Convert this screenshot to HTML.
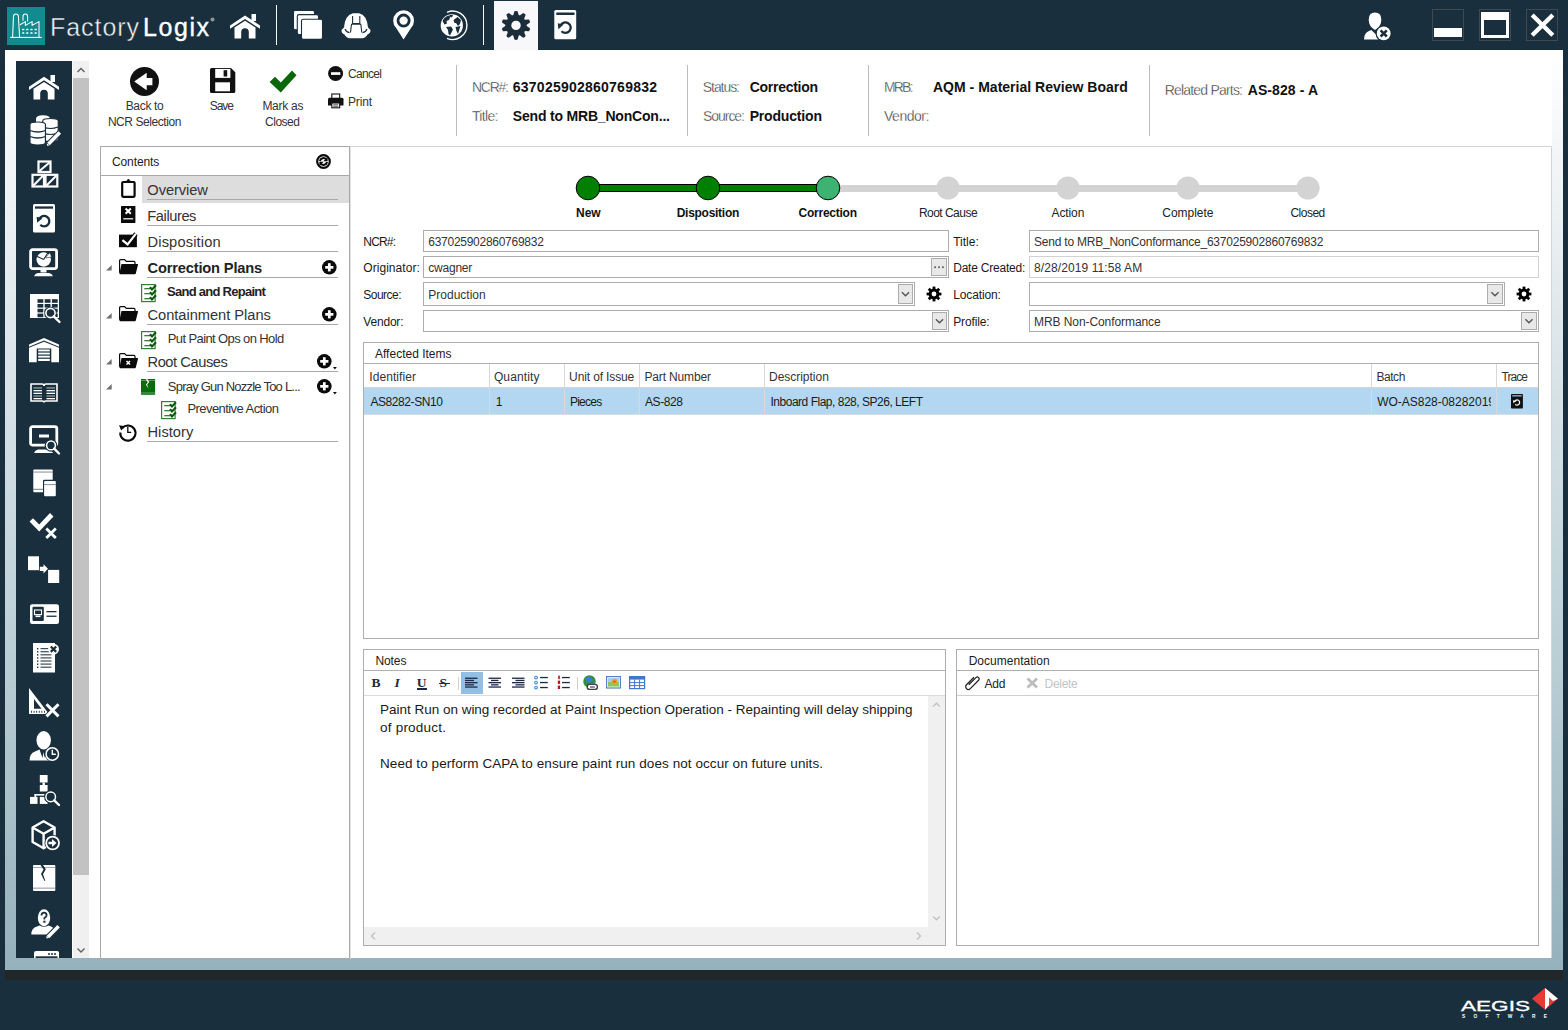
<!DOCTYPE html>
<html><head><meta charset="utf-8"><style>
*{margin:0;padding:0;box-sizing:border-box}
html,body{width:1568px;height:1030px;overflow:hidden;background:#1a2f3d;font-family:"Liberation Sans",sans-serif;color:#333}
.a{position:absolute}
.t{position:absolute;white-space:nowrap;line-height:1}
svg{position:absolute;overflow:visible}
</style></head><body>
<div class="a" style="left:5px;top:50px;width:1558px;height:920px;background:linear-gradient(#ffffff 0%,#e0e8ec 28.3%,#bfd2d9 60.9%,#a9c0c9 82.6%,#95b1bc 100%);"></div>
<div class="a" style="left:16px;top:50px;width:1536px;height:908px;background:#fff;"></div>
<div class="a" style="left:5px;top:970px;width:1558px;height:10px;background:#212729;"></div>
<div class="a" style="left:7px;top:7px;width:38px;height:38px;background:#138b8e;"></div>
<svg style="left:7px;top:7px;" width="38" height="38" viewBox="0 0 38 38"><g fill="none" stroke="#fff" stroke-width="1.05" stroke-linejoin="round"><path d="M3.2 30.4 H34.7"/><path d="M5.6 30.2 L6.5 9.2 Q6.6 7 9 7 Q11.3 7 11.4 9.2 L12.6 30.2"/><path d="M16 13.8 V9.4 Q16 7 18.3 7 Q20.6 7 20.6 9.4 V14.6"/><path d="M13 17.8 L18.4 14.6 V18.4 L25.1 14.6 V18.4 L32 14.6 V30"/></g><g fill="#fff"><rect x="15.1" y="21.7" width="2.3" height="1.5" rx="0.5"/><rect x="15.1" y="25.3" width="2.3" height="1.5" rx="0.5"/><rect x="19.1" y="21.7" width="2.3" height="1.5" rx="0.5"/><rect x="19.1" y="25.3" width="2.3" height="1.5" rx="0.5"/><rect x="23.3" y="21.7" width="2.3" height="1.5" rx="0.5"/><rect x="23.3" y="25.3" width="2.3" height="1.5" rx="0.5"/><rect x="27.5" y="21.7" width="2.3" height="1.5" rx="0.5"/><rect x="27.5" y="25.3" width="2.3" height="1.5" rx="0.5"/></g></svg>
<div class="t" style="left:50.00px;top:14.84px;font-size:25px;color:#f4f6f7;letter-spacing:0.942px;-webkit-text-stroke:0.45px #1a2f3d;">Factory</div>
<div class="t" style="left:143.00px;top:14.84px;font-size:25px;color:#ffffff;letter-spacing:1.558px;-webkit-text-stroke:0.35px #fff;">Logix</div>
<svg style="left:210px;top:17px;" width="5" height="5" viewBox="0 0 5 5"><circle cx="2.5" cy="2.5" r="2" fill="#8a97a0"/></svg>
<svg style="left:230px;top:14px;" width="30" height="25" viewBox="0 0 30 25"><g fill="#fff"><path d="M0 11.5 L15 1.5 L30 11.5 L30 14.8 L15 5 L0 14.8Z"/><rect x="21.5" y="0" width="4.5" height="7"/><path d="M4.5 13.5 L15 6.8 L25.5 13.5 L25.5 24.5 L18.8 24.5 L18.8 18 A3.8 3.8 0 0 0 11.2 18 L11.2 24.5 L4.5 24.5Z"/></g></svg>
<div class="a" style="left:276px;top:5px;width:1px;height:40px;background:#f4f6f7;"></div>
<div class="a" style="left:483px;top:5px;width:1px;height:40px;background:#f4f6f7;"></div>
<svg style="left:293px;top:10px;" width="30" height="30" viewBox="0 0 30 30"><g fill="#fff" stroke="#1a2f3d" stroke-width="1.1"><rect x="0.5" y="0.4" width="21" height="19.4" rx="1.8"/><rect x="4.3" y="4.6" width="21.2" height="20" rx="1.8"/><rect x="8.5" y="9.3" width="21" height="20.1" rx="1.8"/></g></svg>
<svg style="left:341px;top:13px;" width="30" height="26" viewBox="0 0 30 26"><path d="M12 0.2 H18 Q26 2 27 14.5 L29.5 17 Q29.7 20 26.5 21.5 Q24 25.5 21 25.2 H9 Q6 25.5 3.5 21.5 Q0.3 20 0.5 17 L3 14.5 Q4 2 12 0.2Z" fill="#fff"/><g fill="none" stroke="#1a2f3d" stroke-width="1.1"><path d="M11.6 3 V10.5 H18.8 V3"/><path d="M9.5 19.5 L10.5 11.2 H19.8 L20.8 19.5"/><path d="M4 16 Q5 19 8.5 19.6 M26 16 Q25 19 21.5 19.6"/></g></svg>
<svg style="left:393px;top:10px;" width="22" height="30" viewBox="0 0 22 30"><path d="M10.6 29.4 L3.2 18 A10.4 10.4 0 1 1 18 18Z" fill="#fff"/><circle cx="10.6" cy="10.6" r="5.6" fill="none" stroke="#1a2f3d" stroke-width="2.8"/></svg>
<svg style="left:440px;top:10px;" width="28" height="31" viewBox="0 0 28 31"><circle cx="11.8" cy="15.4" r="11.1" fill="#fff"/><path d="M7 2.3 A14.2 14.2 0 1 1 7 28.3" fill="none" stroke="#fff" stroke-width="1.4"/><g fill="#1a2f3d"><path d="M2.5 11 Q4.5 7 8 5.5 L10.5 6.5 L9 10 L6.5 11 L7 13.5 L4.5 14.5 Z"/><path d="M9 5 L13 5 L12 7.5 L10.5 7Z"/><path d="M6 17 L11 16.5 L13 19.5 L10 25.5 L8.5 24 L8 20Z"/><path d="M13.5 10 L17.5 7 L21 10 L20 14 L18 16 L16 13 L14.5 13Z"/><path d="M15.5 17 L20.5 16 L18 24 L16.5 21Z"/></g></svg>
<div class="a" style="left:494px;top:1px;width:44px;height:49px;background:#f8f8fb;"></div>
<svg style="left:502px;top:11px;" width="28" height="29" viewBox="0 0 28 29"><g transform="translate(14,14.4)" fill="#1c2d3a"><path d="M-1.6 -14.2 Q0 -14.8 1.6 -14.2 L2.9 -9.5 H-2.9Z" transform="rotate(0)"/><path d="M-1.6 -14.2 Q0 -14.8 1.6 -14.2 L2.9 -9.5 H-2.9Z" transform="rotate(36)"/><path d="M-1.6 -14.2 Q0 -14.8 1.6 -14.2 L2.9 -9.5 H-2.9Z" transform="rotate(72)"/><path d="M-1.6 -14.2 Q0 -14.8 1.6 -14.2 L2.9 -9.5 H-2.9Z" transform="rotate(108)"/><path d="M-1.6 -14.2 Q0 -14.8 1.6 -14.2 L2.9 -9.5 H-2.9Z" transform="rotate(144)"/><path d="M-1.6 -14.2 Q0 -14.8 1.6 -14.2 L2.9 -9.5 H-2.9Z" transform="rotate(180)"/><path d="M-1.6 -14.2 Q0 -14.8 1.6 -14.2 L2.9 -9.5 H-2.9Z" transform="rotate(216)"/><path d="M-1.6 -14.2 Q0 -14.8 1.6 -14.2 L2.9 -9.5 H-2.9Z" transform="rotate(252)"/><path d="M-1.6 -14.2 Q0 -14.8 1.6 -14.2 L2.9 -9.5 H-2.9Z" transform="rotate(288)"/><path d="M-1.6 -14.2 Q0 -14.8 1.6 -14.2 L2.9 -9.5 H-2.9Z" transform="rotate(324)"/><circle r="10.6"/><circle r="4.7" fill="#f8f8fb"/></g></svg>
<svg style="left:554px;top:10px;" width="23" height="30" viewBox="0 0 23 30"><rect x="0.3" y="0" width="21.9" height="29.3" rx="1.6" fill="#fff"/><rect x="2.2" y="2.4" width="18.4" height="2.5" rx="0.6" fill="#1a2f3d"/><path d="M7.5 21.2 A5.3 5.3 0 1 0 6.6 15.5" fill="none" stroke="#1a2f3d" stroke-width="2.3"/><path d="M3.8 13.2 L9.6 14.6 L4.4 19.3Z" fill="#1a2f3d"/></svg>
<svg style="left:1363px;top:12px;" width="29" height="30" viewBox="0 0 29 30"><path d="M5.7 7.5 Q5.7 0.6 12 0.6 Q18.3 0.6 18.3 7.5 Q18.3 14.6 12 17.9 Q5.7 14.6 5.7 7.5Z" fill="#fff"/><path d="M1 27.6 Q1 20.5 6.5 18.7 L8.3 17.9 L13 22.5 L16 21 L15 27.6Z" fill="#fff"/><circle cx="20.7" cy="21.4" r="8.1" fill="#1a2f3d"/><circle cx="20.7" cy="21.4" r="6.9" fill="#fff"/><path d="M17.6 18.3 L23.8 24.5 M23.8 18.3 L17.6 24.5" stroke="#1a2f3d" stroke-width="2.5"/></svg>
<div class="a" style="left:1432px;top:9px;width:32px;height:32px;border:1px solid #3d4a52;"></div>
<div class="a" style="left:1479px;top:9px;width:32px;height:32px;border:1px solid #3d4a52;"></div>
<div class="a" style="left:1526px;top:9px;width:32px;height:32px;border:1px solid #3d4a52;"></div>
<div class="a" style="left:1434px;top:28px;width:28px;height:9px;background:#fff;"></div>
<div class="a" style="left:1481px;top:12px;width:28px;height:26px;border:3px solid #fff;border-top-width:8px;"></div>
<svg style="left:1529px;top:12px;" width="27" height="26" viewBox="0 0 27 26"><path d="M3.2 3 L23.8 23.3 M23.8 3 L3.2 23.3" stroke="#fff" stroke-width="4.4"/></svg>
<div class="a" style="left:16px;top:61px;width:56px;height:897px;background:#1a2f3d;"></div>
<svg style="left:29px;top:74.5px;" width="30" height="25" viewBox="0 0 30 25"><g fill="#fff"><path d="M0 11.8 L15 1.8 L30 11.8 L30 15 L15 5.2 L0 15Z"/><rect x="21.5" y="0" width="4.5" height="7"/><path d="M4.5 13.8 L15 7 L25.5 13.8 L25.5 24.5 L18.8 24.5 L18.8 18.5 A3.8 3.8 0 0 0 11.2 18.5 L11.2 24.5 L4.5 24.5Z"/></g></svg>
<svg style="left:30px;top:115px;" width="31" height="32" viewBox="0 0 31 32"><path d="M6 4 Q6 0.3 13 0.3 Q20 0.3 20 4 V8 H6Z" fill="#fff"/><path d="M12.75 6.0 Q12.75 3.5 20.5 3.5 Q28.25 3.5 28.25 6.0 V24.0 Q28.25 26.5 20.5 26.5 Q12.75 26.5 12.75 24.0Z" fill="#fff" stroke="#1a2f3d" stroke-width="1.2"/><path d="M13 12 Q20.5 15 28 12 M13 18 Q20.5 21 28 18" stroke="#1a2f3d" stroke-width="1.2" fill="none"/><path d="M-0.04999999999999982 9.5 Q-0.04999999999999982 7 7.7 7 Q15.45 7 15.45 9.5 V27.5 Q15.45 30 7.7 30 Q-0.04999999999999982 30 -0.04999999999999982 27.5Z" fill="#fff" stroke="#1a2f3d" stroke-width="1.2"/><path d="M0 15.5 Q7.7 18.5 15.5 15.5 M0 21.5 Q7.7 24.5 15.5 21.5" stroke="#1a2f3d" stroke-width="1.3" fill="none"/><path d="M29.8 17.5 L18 29.5" stroke="#1a2f3d" stroke-width="5.5"/><path d="M29.8 17.5 L18.5 29" stroke="#fff" stroke-width="3.6"/><path d="M17.3 31 L16.6 28.2 L19.5 30.2Z" fill="#fff"/></svg>
<svg style="left:30.5px;top:159.5px;" width="28" height="28" viewBox="0 0 28 28"><rect x="7.5" y="1.5" width="12" height="10.5" fill="none" stroke="#fff" stroke-width="2.2"/><path d="M8.5 11.0 L18.5 2.5" stroke="#fff" stroke-width="2"/><rect x="1.5" y="14.8" width="11.5" height="11.7" fill="none" stroke="#fff" stroke-width="2.2"/><path d="M2.5 25.5 L12.0 15.8" stroke="#fff" stroke-width="2"/><rect x="14.5" y="14.8" width="11.8" height="11.7" fill="none" stroke="#fff" stroke-width="2.2"/><path d="M15.5 25.5 L25.3 15.8" stroke="#fff" stroke-width="2"/></svg>
<svg style="left:33px;top:203.5px;" width="22" height="29" viewBox="0 0 22 29"><rect x="0" y="0" width="22" height="28.5" rx="1.5" fill="#fff"/><rect x="2" y="2.4" width="18" height="2.3" fill="#1a2f3d"/><path d="M7.3 20.7 A5.2 5.2 0 1 0 6.4 15" fill="none" stroke="#1a2f3d" stroke-width="2.3"/><path d="M3.6 12.8 L9.4 14.2 L4.2 18.8Z" fill="#1a2f3d"/></svg>
<svg style="left:29px;top:247.5px;" width="30" height="29" viewBox="0 0 30 29"><rect x="1.6" y="1.6" width="26" height="19" rx="2" fill="none" stroke="#fff" stroke-width="2.8"/><rect x="11.5" y="21.5" width="6" height="3" fill="#fff"/><path d="M5 28.3 Q6 25.3 9 25 H20 Q23 25.3 24 28.3Z" fill="#fff"/><circle cx="14.7" cy="11.5" r="7.2" fill="#fff"/><path d="M14.7 11.5 L7.8 8.2 M14.7 11.5 L19 4.5" stroke="#1a2f3d" stroke-width="1.1"/><path d="M16.5 10 L20.5 4.8 Q22 6.5 22.5 9 Z" fill="#fff" stroke="#1a2f3d" stroke-width="0.6"/></svg>
<svg style="left:30px;top:293.5px;" width="30" height="29" viewBox="0 0 30 29"><rect x="0" y="0" width="29" height="24" fill="#fff"/><rect x="7.5" y="5.2" width="5.8" height="3.6" fill="#1a2f3d"/><rect x="14.7" y="5.2" width="5.8" height="3.6" fill="#1a2f3d"/><rect x="21.9" y="5.2" width="5.8" height="3.6" fill="#1a2f3d"/><rect x="7.5" y="10.0" width="5.8" height="3.6" fill="#1a2f3d"/><rect x="14.7" y="10.0" width="5.8" height="3.6" fill="#1a2f3d"/><rect x="21.9" y="10.0" width="5.8" height="3.6" fill="#1a2f3d"/><rect x="7.5" y="14.8" width="5.8" height="3.6" fill="#1a2f3d"/><rect x="14.7" y="14.8" width="5.8" height="3.6" fill="#1a2f3d"/><rect x="21.9" y="14.8" width="5.8" height="3.6" fill="#1a2f3d"/><rect x="7.5" y="19.599999999999998" width="5.8" height="3.6" fill="#1a2f3d"/><rect x="14.7" y="19.599999999999998" width="5.8" height="3.6" fill="#1a2f3d"/><rect x="21.9" y="19.599999999999998" width="5.8" height="3.6" fill="#1a2f3d"/><circle cx="20.5" cy="19" r="6.2" fill="#1a2f3d"/><circle cx="20.5" cy="19" r="4.6" fill="none" stroke="#fff" stroke-width="1.6"/><path d="M23.8 22.3 L29.5 28" stroke="#fff" stroke-width="2.4" stroke-linecap="round"/></svg>
<svg style="left:29px;top:338px;" width="30" height="25" viewBox="0 0 30 25"><path d="M0 6.5 L15 0 L30 6.5 V8.8 L15 2.5 L0 8.8Z" fill="#fff"/><path d="M0 9.8 L15 3.8 L30 9.8 V24.2 H22.3 V10.5 H7.7 V24.2 H0Z" fill="#fff"/><g fill="#fff"><rect x="9.2" y="11.5" width="11.6" height="1.9"/><rect x="9.2" y="14.6" width="11.6" height="1.9"/><rect x="9.2" y="17.7" width="11.6" height="1.9"/><rect x="9.2" y="20.8" width="11.6" height="2.2"/></g></svg>
<svg style="left:30px;top:383px;" width="28" height="20" viewBox="0 0 28 20"><path d="M1 1 H12 Q14 1 14 3 Q14 1 16 1 H27 V18 H16 Q14 18 14 19.5 Q14 18 12 18 H1Z" fill="none" stroke="#fff" stroke-width="1.6"/><rect x="3.5" y="4.3" width="8.5" height="1.3" fill="#fff" opacity="0.55"/><rect x="16.5" y="4.3" width="8.5" height="1.3" fill="#fff" opacity="0.55"/><rect x="3.5" y="7" width="8.5" height="1.3" fill="#fff" opacity="1"/><rect x="16.5" y="7" width="8.5" height="1.3" fill="#fff" opacity="1"/><rect x="3.5" y="9.7" width="8.5" height="1.3" fill="#fff" opacity="1"/><rect x="16.5" y="9.7" width="8.5" height="1.3" fill="#fff" opacity="1"/><rect x="3.5" y="12.4" width="8.5" height="1.3" fill="#fff" opacity="0.55"/><rect x="16.5" y="12.4" width="8.5" height="1.3" fill="#fff" opacity="0.55"/><rect x="3.5" y="15" width="8.5" height="1.3" fill="#fff" opacity="1"/><rect x="16.5" y="15" width="8.5" height="1.3" fill="#fff" opacity="1"/></svg>
<svg style="left:29px;top:424.5px;" width="31" height="30" viewBox="0 0 31 30"><rect x="1.6" y="1.6" width="26.2" height="18.6" rx="2" fill="none" stroke="#fff" stroke-width="2.8"/><rect x="10" y="9.5" width="10" height="3" fill="#fff"/><path d="M5 28 Q6 25 9 24.5 H20 Q23 25 24 28Z" fill="#fff"/><circle cx="22" cy="20.4" r="6.3" fill="#1a2f3d"/><circle cx="22" cy="20.4" r="4.4" fill="none" stroke="#fff" stroke-width="1.6"/><path d="M25.2 23.6 L30 28.5" stroke="#fff" stroke-width="2.4" stroke-linecap="round"/></svg>
<svg style="left:32.5px;top:468.5px;" width="23" height="28" viewBox="0 0 23 28"><rect x="0.3" y="0.4" width="19.4" height="22.9" rx="1" fill="#fff"/><rect x="0.3" y="2.6" width="19.4" height="0.9" fill="#1a2f3d" opacity="0.6"/><rect x="0.3" y="19.8" width="19.4" height="1" fill="#1a2f3d" opacity="0.6"/><rect x="10" y="10.8" width="13" height="17" rx="1.2" fill="#1a2f3d"/><rect x="11.1" y="12" width="11.7" height="15.2" rx="1" fill="#fff"/><rect x="11.1" y="15.2" width="11.7" height="0.9" fill="#1a2f3d" opacity="0.6"/></svg>
<svg style="left:28.5px;top:512px;" width="29" height="28" viewBox="0 0 29 28"><path d="M0.5 9.5 L4 6.2 L10.2 12.4 L21 1 L24.5 4.5 L10.2 19.5Z" fill="#fff"/><path d="M17.3 16.5 L26.8 26 M26.8 16.5 L17.3 26" stroke="#fff" stroke-width="2.8"/></svg>
<svg style="left:28px;top:556px;" width="32" height="28" viewBox="0 0 32 28"><rect x="0" y="0.3" width="11" height="13.9" fill="#fff"/><rect x="20.1" y="13.9" width="11.1" height="13.1" fill="#fff"/><path d="M11.8 10.8 H15.5 V8.3 L20 12.7 L15.5 17.5 V15 H11.8Z" fill="#fff"/></svg>
<svg style="left:29.5px;top:604px;" width="29" height="20" viewBox="0 0 29 20"><rect x="0" y="0.2" width="29" height="19.7" rx="2.2" fill="#fff"/><rect x="2.5" y="2.7" width="11.3" height="14.3" rx="1" fill="#1a2f3d"/><rect x="4.5" y="6" width="7" height="4.6" fill="none" stroke="#fff" stroke-width="1.1"/><rect x="5.5" y="11.5" width="5" height="1.6" fill="#fff"/><rect x="16.5" y="7" width="10" height="1.3" fill="#1a2f3d"/><rect x="16.5" y="11.6" width="10" height="1.3" fill="#1a2f3d"/></svg>
<svg style="left:32.8px;top:643.2px;" width="23" height="30" viewBox="0 0 23 30"><rect x="0" y="0" width="22" height="29.5" fill="#fff"/><rect x="4" y="5.0" width="1.4" height="1.4" fill="#1a2f3d"/><rect x="7.5" y="5.0" width="10.5" height="1.2" fill="#1a2f3d" opacity="0.85"/><rect x="4" y="8.1" width="1.4" height="1.4" fill="#1a2f3d"/><rect x="7.5" y="8.1" width="10.5" height="1.2" fill="#1a2f3d" opacity="0.85"/><rect x="4" y="11.2" width="1.4" height="1.4" fill="#1a2f3d"/><rect x="7.5" y="11.2" width="11" height="1.2" fill="#1a2f3d" opacity="0.85"/><rect x="4" y="14.3" width="1.4" height="1.4" fill="#1a2f3d"/><rect x="7.5" y="14.3" width="11" height="1.2" fill="#1a2f3d" opacity="0.85"/><rect x="4" y="17.4" width="1.4" height="1.4" fill="#1a2f3d"/><rect x="7.5" y="17.4" width="11" height="1.2" fill="#1a2f3d" opacity="0.85"/><rect x="4" y="20.5" width="1.4" height="1.4" fill="#1a2f3d"/><rect x="7.5" y="20.5" width="11" height="1.2" fill="#1a2f3d" opacity="0.85"/><rect x="4" y="23.6" width="1.4" height="1.4" fill="#1a2f3d"/><rect x="7.5" y="23.6" width="11" height="1.2" fill="#1a2f3d" opacity="0.85"/><circle cx="20.5" cy="6.2" r="5.5" fill="#fff"/><path d="M17.8 3.5 L23.2 8.9 M23.2 3.5 L17.8 8.9" stroke="#1a2f3d" stroke-width="2.2"/></svg>
<svg style="left:29.3px;top:688.1px;" width="30" height="29" viewBox="0 0 30 29"><path d="M0 0 L20 26 H0Z M5 11 V20.7 H12.5Z" fill="#fff" fill-rule="evenodd"/><g fill="#1a2f3d"><rect x="2.0" y="22.8" width="0.9" height="2" /><rect x="4.6" y="22.8" width="0.9" height="2" /><rect x="7.2" y="22.8" width="0.9" height="2" /><rect x="9.8" y="22.8" width="0.9" height="2" /><rect x="12.4" y="22.8" width="0.9" height="2" /><rect x="15.0" y="22.8" width="0.9" height="2" /></g><path d="M17.5 16.3 L29.5 28.4 M29.5 16.3 L17.5 28.4" stroke="#1a2f3d" stroke-width="5"/><path d="M17.5 16.3 L29.5 28.4 M29.5 16.3 L17.5 28.4" stroke="#fff" stroke-width="3"/></svg>
<svg style="left:29.3px;top:731px;" width="31" height="31" viewBox="0 0 31 31"><ellipse cx="14.7" cy="9.3" rx="7.2" ry="9.2" fill="#fff"/><path d="M0.5 29.5 Q0.5 22.5 6 20.5 L10.5 18.5 L13.5 27 L14.5 21 L15.5 27 L17 18.5 L21.5 20.5 Q23 22 23 29.5Z" fill="#fff"/><circle cx="23.3" cy="23" r="7.6" fill="#1a2f3d"/><circle cx="23.3" cy="23" r="6.2" fill="none" stroke="#fff" stroke-width="1.5"/><path d="M23.3 18.8 V23.3 H26.8" fill="none" stroke="#fff" stroke-width="1.4"/></svg>
<svg style="left:30.3px;top:775.3px;" width="30" height="31" viewBox="0 0 30 31"><g fill="#fff"><rect x="9.8" y="0" width="7.8" height="7.5"/><rect x="12.5" y="7.5" width="2.4" height="2.5"/><rect x="9.8" y="10" width="7.8" height="6.5"/><rect x="0" y="21.9" width="7.5" height="7"/><rect x="9.8" y="21.9" width="7.8" height="7"/><rect x="4.5" y="19" width="10" height="1.6"/><rect x="4.5" y="19" width="1.6" height="3"/></g><circle cx="20.7" cy="21.9" r="6.6" fill="#1a2f3d"/><circle cx="20.7" cy="21.9" r="4.8" fill="none" stroke="#fff" stroke-width="1.5"/><path d="M24.2 25.4 L29 30" stroke="#fff" stroke-width="2.4" stroke-linecap="round"/></svg>
<svg style="left:31px;top:819.5px;" width="30" height="30" viewBox="0 0 30 30"><path d="M12.6 1.2 L23.6 7.5 V22 L12.6 28.3 L1.6 22 V7.5Z M1.6 7.5 L12.6 13.8 L23.6 7.5 M12.6 13.8 V28.3" fill="none" stroke="#fff" stroke-width="2.4" stroke-linejoin="round"/><circle cx="21.6" cy="23" r="8" fill="#1a2f3d"/><circle cx="21.6" cy="23" r="6.4" fill="none" stroke="#fff" stroke-width="1.8"/><path d="M17.5 21.8 H21 V19 L25.5 23 L21 27 V24.2 H17.5Z" fill="#fff"/></svg>
<svg style="left:32.8px;top:865px;" width="23" height="26" viewBox="0 0 23 26"><rect x="0" y="0" width="22.3" height="26" rx="1" fill="#fff"/><rect x="0" y="2" width="22.3" height="0.9" fill="#1a2f3d" opacity="0.45"/><rect x="0" y="22.6" width="22.3" height="1.1" fill="#1a2f3d" opacity="0.45"/><path d="M7.5 0 L10.5 4.5 L8 9 L11.5 16 L12.3 15.8 L10 9.2 L12.8 4.2 L10 0Z" fill="#1a2f3d"/></svg>
<svg style="left:31px;top:909px;" width="30" height="30" viewBox="0 0 30 30"><ellipse cx="13" cy="8.7" rx="6.2" ry="8.5" fill="#fff"/><path d="M10.5 6.5 Q10.5 3.6 13 3.6 Q15.6 3.6 15.6 6.2 Q15.6 8 13.4 9 V10.5" fill="none" stroke="#1a2f3d" stroke-width="1.8"/><rect x="12.3" y="11.7" width="2.2" height="2" fill="#1a2f3d"/><path d="M0.3 25.6 Q0.3 19 6 17.5 L8.6 16.5 Q13 19 17.5 16.5 L20 17.5 Q23.5 19 24.5 21.5 L20.5 25.6Z" fill="#fff"/><path d="M27.6 17.3 L16.5 28.5" stroke="#1a2f3d" stroke-width="5.5"/><path d="M27.6 17.3 L17 28" stroke="#fff" stroke-width="3.4"/><path d="M15.6 29.5 L15.3 26.8 L18 28.8Z" fill="#fff"/></svg>
<svg style="left:34px;top:951px;overflow:hidden;" width="25" height="7" viewBox="0 0 25 7"><rect x="0.8" y="0.8" width="23.5" height="12" rx="1.5" fill="none" stroke="#fff" stroke-width="1.6"/><rect x="0.8" y="0.8" width="23.5" height="4.5" fill="#fff"/><circle cx="15" cy="3" r="1" fill="#1a2f3d"/><circle cx="18" cy="3" r="1" fill="#1a2f3d"/><circle cx="21" cy="3" r="1" fill="#1a2f3d"/></svg>
<div class="a" style="left:72px;top:61px;width:1px;height:897px;background:#ffffff;"></div>
<div class="a" style="left:73px;top:61px;width:16px;height:897px;background:#f0f0f0;"></div>
<div class="a" style="left:73px;top:78px;width:16px;height:797px;background:#c2c2c2;"></div>
<svg style="left:73px;top:61px;" width="16" height="17" viewBox="0 0 16 17"><path d="M4.5 11 L8 7.5 L11.5 11" fill="none" stroke="#606060" stroke-width="1.4"/></svg>
<svg style="left:73px;top:942px;" width="16" height="16" viewBox="0 0 16 16"><path d="M4.5 6.5 L8 10 L11.5 6.5" fill="none" stroke="#606060" stroke-width="1.4"/></svg>
<div class="a" style="left:100px;top:146px;width:250px;height:813px;border:1px solid #a9a9a9;"></div>
<div class="a" style="left:101px;top:175px;width:248px;height:1px;background:#a9a9a9;"></div>
<div class="a" style="left:350px;top:146px;width:1px;height:813px;background:#e2e2e2;"></div>
<div class="a" style="left:351px;top:146px;width:1201px;height:1px;background:#d4d4d4;"></div>
<div class="a" style="left:1551px;top:146px;width:1px;height:812px;background:#d4d4d4;"></div>
<svg style="left:130px;top:66.5px;" width="29" height="29" viewBox="0 0 29 29"><circle cx="14.5" cy="14.5" r="14.5" fill="#111"/><path d="M4.2 14.5 L16.7 5.7 V11.1 H22.4 V18.2 H16.7 V23.3Z" fill="#fff"/></svg>
<div class="t" style="left:125.70px;top:99.54px;font-size:12px;color:#333;letter-spacing:-0.320px;">Back to</div>
<div class="t" style="left:107.90px;top:115.64px;font-size:12px;color:#333;letter-spacing:-0.433px;">NCR Selection</div>
<svg style="left:209.5px;top:68.4px;" width="25.3" height="25" viewBox="0 0 25.3 25"><path d="M0 1.6 Q0 0 1.6 0 H21 L25.3 4.3 V23.4 Q25.3 25 23.7 25 H1.6 Q0 25 0 23.4Z" fill="#111"/><rect x="5.2" y="0.9" width="15.2" height="9" fill="#fff"/><rect x="13.6" y="2.2" width="3.6" height="6.3" fill="#111"/><rect x="5.2" y="14.3" width="14.8" height="9" fill="#fff"/></svg>
<div class="t" style="left:209.80px;top:99.54px;font-size:12px;color:#333;letter-spacing:-1.084px;">Save</div>
<svg style="left:268.5px;top:69.5px;" width="28" height="23" viewBox="0 0 28 23"><path d="M0.6 11.9 L6 6.8 L11.8 12.5 L23 0.5 L27.5 5.3 L11.8 22.5Z" fill="#0a680a"/></svg>
<div class="t" style="left:262.40px;top:99.54px;font-size:12px;color:#333;letter-spacing:-0.262px;">Mark as</div>
<div class="t" style="left:265.00px;top:115.64px;font-size:12px;color:#333;letter-spacing:-0.471px;">Closed</div>
<svg style="left:328px;top:65.7px;" width="15.5" height="15" viewBox="0 0 15.5 15"><circle cx="7.6" cy="7.5" r="7.5" fill="#111"/><rect x="3" y="6.2" width="9.3" height="2.7" fill="#fff"/></svg>
<div class="t" style="left:348.00px;top:67.84px;font-size:12px;color:#333;letter-spacing:-0.671px;">Cancel</div>
<svg style="left:328px;top:93px;" width="15.5" height="16" viewBox="0 0 15.5 16"><rect x="3.8" y="1" width="7.9" height="4.5" fill="#fff" stroke="#111" stroke-width="1.1"/><path d="M0 6.2 Q0 4.7 1.5 4.7 H14 Q15.5 4.7 15.5 6.2 V12 Q15.5 12.6 14.8 12.6 H0.7 Q0 12.6 0 12Z" fill="#111"/><rect x="3.8" y="10" width="7.9" height="4.8" fill="#fff" stroke="#111" stroke-width="1.1"/><path d="M5.2 11.8 H10.3 M5.2 13.3 H10.3" stroke="#111" stroke-width="0.7"/></svg>
<div class="t" style="left:348.00px;top:95.54px;font-size:12px;color:#333;letter-spacing:-0.169px;">Print</div>
<div class="a" style="left:456px;top:65px;width:1px;height:71px;background:#bdbdbd;"></div>
<div class="a" style="left:687px;top:65px;width:1px;height:71px;background:#bdbdbd;"></div>
<div class="a" style="left:868px;top:65px;width:1px;height:71px;background:#bdbdbd;"></div>
<div class="a" style="left:1149px;top:65px;width:1px;height:71px;background:#bdbdbd;"></div>
<div class="t" style="left:472.00px;top:80.05px;font-size:14px;color:#333;letter-spacing:-1.252px;-webkit-text-stroke:0.3px #fff;">NCR#:</div>
<div class="t" style="left:512.80px;top:80.05px;font-size:14px;font-weight:700;color:#111;letter-spacing:0.238px;">637025902860769832</div>
<div class="t" style="left:472.00px;top:109.15px;font-size:14px;color:#333;letter-spacing:-0.684px;-webkit-text-stroke:0.3px #fff;">Title:</div>
<div class="t" style="left:512.80px;top:109.15px;font-size:14px;font-weight:700;color:#111;letter-spacing:-0.189px;">Send to MRB_NonCon...</div>
<div class="t" style="left:702.80px;top:80.15px;font-size:14px;color:#333;letter-spacing:-1.063px;-webkit-text-stroke:0.3px #fff;">Status:</div>
<div class="t" style="left:749.70px;top:80.15px;font-size:14px;font-weight:700;color:#111;letter-spacing:-0.276px;">Correction</div>
<div class="t" style="left:703.00px;top:109.15px;font-size:14px;color:#333;letter-spacing:-1.041px;-webkit-text-stroke:0.3px #fff;">Source:</div>
<div class="t" style="left:749.70px;top:109.15px;font-size:14px;font-weight:700;color:#111;letter-spacing:-0.176px;">Production</div>
<div class="t" style="left:884.00px;top:80.15px;font-size:14px;color:#333;letter-spacing:-1.833px;-webkit-text-stroke:0.3px #fff;">MRB:</div>
<div class="t" style="left:933.00px;top:80.15px;font-size:14px;font-weight:700;color:#111;letter-spacing:0.012px;">AQM - Material Review Board</div>
<div class="t" style="left:884.00px;top:109.15px;font-size:14px;color:#333;letter-spacing:-0.477px;-webkit-text-stroke:0.3px #fff;">Vendor:</div>
<div class="t" style="left:1164.70px;top:82.65px;font-size:14px;color:#333;letter-spacing:-0.801px;-webkit-text-stroke:0.3px #fff;">Related Parts:</div>
<div class="t" style="left:1247.70px;top:82.65px;font-size:14px;font-weight:700;color:#111;letter-spacing:0.089px;">AS-828 - A</div>
<div class="t" style="left:112.00px;top:155.84px;font-size:12px;color:#222;letter-spacing:-0.118px;">Contents</div>
<svg style="left:315.5px;top:153.5px;" width="15" height="15" viewBox="0 0 15 15"><circle cx="7.5" cy="7.5" r="6.3" fill="none" stroke="#0a0a0a" stroke-width="2.2"/><path d="M3.9 7 A3.7 3.7 0 0 1 10.3 5.3" fill="none" stroke="#0a0a0a" stroke-width="2"/><path d="M11.6 2.8 V7.2 H7.4Z" fill="#0a0a0a"/><path d="M11.1 8 A3.7 3.7 0 0 1 4.7 9.7" fill="none" stroke="#0a0a0a" stroke-width="2"/><path d="M3.4 12.2 V7.8 H7.6Z" fill="#0a0a0a"/></svg>
<div class="a" style="left:142px;top:176px;width:207px;height:27px;background:#dddddd;"></div>
<svg style="left:120.5px;top:179px;" width="15" height="19" viewBox="0 0 15 19"><rect x="1.2" y="3" width="12.4" height="14.8" rx="1" fill="#fff" stroke="#0a0a0a" stroke-width="2.2"/><path d="M4.5 3.5 V1.8 H6 Q6 0 7.4 0 Q8.8 0 8.8 1.8 H10.3 V3.5" fill="#0a0a0a"/></svg>
<div class="t" style="left:147.30px;top:183.08px;font-size:14.67px;color:#333;letter-spacing:-0.062px;">Overview</div>
<div class="a" style="left:147px;top:199px;width:191px;height:1px;background:#a8a8a8;"></div>
<svg style="left:120.8px;top:206.4px;" width="15" height="17.5" viewBox="0 0 15 17.5"><rect x="0" y="0" width="14.4" height="17.1" rx="0.6" fill="#0a0a0a"/><path d="M4.6 2.5 L9.8 7.7 M9.8 2.5 L4.6 7.7" stroke="#fff" stroke-width="2"/><rect x="2.2" y="12.2" width="10" height="1.2" fill="#fff"/></svg>
<div class="t" style="left:147.30px;top:209.28px;font-size:14.67px;color:#333;letter-spacing:-0.425px;">Failures</div>
<div class="a" style="left:147px;top:225px;width:191px;height:1px;background:#a8a8a8;"></div>
<svg style="left:119px;top:233px;" width="19" height="15" viewBox="0 0 19 15"><rect x="0" y="1.6" width="17.9" height="12.6" fill="#0a0a0a"/><path d="M3.4 7.2 L8.6 11.4 L17 0.6" fill="none" stroke="#0a0a0a" stroke-width="4.2"/><path d="M3.4 7.2 L8.6 11.4 L17 0.6" fill="none" stroke="#fff" stroke-width="2.2"/></svg>
<div class="t" style="left:147.50px;top:235.38px;font-size:14.67px;color:#333;letter-spacing:0.145px;">Disposition</div>
<div class="a" style="left:147px;top:251px;width:191px;height:1px;background:#a8a8a8;"></div>
<svg style="left:106.2px;top:265.4px;" width="6" height="6" viewBox="0 0 6 6"><path d="M0 5.5 L5.7 0 V5.5Z" fill="#707070"/></svg>
<svg style="left:118.8px;top:258.6px;" width="20" height="16" viewBox="0 0 20 16"><path d="M0.6 13.8 V1.6 Q0.6 0.6 1.6 0.6 H5.6 L7.3 2.4 H15 Q16 2.4 16 3.4 V5" fill="#fff" stroke="#0a0a0a" stroke-width="1.2"/><path d="M2.5 5 H18.6 Q19.2 5 19 5.7 L16.8 14.6 Q16.6 15.3 16 15.3 H1.3 Q0.3 15.3 0.5 14.3Z" fill="#0a0a0a"/></svg>
<div class="t" style="left:147.50px;top:261.18px;font-size:14.67px;font-weight:700;color:#222;letter-spacing:-0.173px;">Correction Plans</div>
<div class="a" style="left:147px;top:277px;width:191px;height:1px;background:#a8a8a8;"></div>
<svg style="left:321.7px;top:259.9px;" width="15" height="15" viewBox="0 0 15 15"><circle cx="7.3" cy="7.3" r="7.3" fill="#0a0a0a"/><rect x="3.2" y="6" width="8.2" height="2.7" fill="#fff"/><rect x="5.95" y="3.2" width="2.7" height="8.2" fill="#fff"/></svg>
<svg style="left:140.7px;top:284px;" width="16" height="18" viewBox="0 0 16 18"><rect x="0.6" y="0.6" width="13.5" height="17" fill="#fff" stroke="#3a7a3a" stroke-width="1.2"/><rect x="3.3" y="4" width="6.2" height="1.3" fill="#3a7a3a"/><path d="M9 3.1 L11 5.5 L15 1.2000000000000002" fill="none" stroke="#0b5a0b" stroke-width="2.1"/><rect x="3.3" y="9" width="6.2" height="1.3" fill="#3a7a3a"/><path d="M9 8.1 L11 10.5 L15 6.2" fill="none" stroke="#0b5a0b" stroke-width="2.1"/><rect x="3.3" y="14" width="6.2" height="1.3" fill="#3a7a3a"/><path d="M9 13.1 L11 15.5 L15 11.2" fill="none" stroke="#0b5a0b" stroke-width="2.1"/></svg>
<div class="t" style="left:167.00px;top:285.00px;font-size:13px;font-weight:700;color:#222;letter-spacing:-0.733px;">Sand and Repaint</div>
<svg style="left:106.2px;top:312.6px;" width="6" height="6" viewBox="0 0 6 6"><path d="M0 5.5 L5.7 0 V5.5Z" fill="#707070"/></svg>
<svg style="left:118.8px;top:306.2px;" width="20" height="16" viewBox="0 0 20 16"><path d="M0.6 13.8 V1.6 Q0.6 0.6 1.6 0.6 H5.6 L7.3 2.4 H15 Q16 2.4 16 3.4 V5" fill="#fff" stroke="#0a0a0a" stroke-width="1.2"/><path d="M2.5 5 H18.6 Q19.2 5 19 5.7 L16.8 14.6 Q16.6 15.3 16 15.3 H1.3 Q0.3 15.3 0.5 14.3Z" fill="#0a0a0a"/></svg>
<div class="t" style="left:147.50px;top:308.28px;font-size:14.67px;color:#333;letter-spacing:-0.028px;">Containment Plans</div>
<div class="a" style="left:147px;top:324px;width:191px;height:1px;background:#a8a8a8;"></div>
<svg style="left:321.7px;top:307.0px;" width="15" height="15" viewBox="0 0 15 15"><circle cx="7.3" cy="7.3" r="7.3" fill="#0a0a0a"/><rect x="3.2" y="6" width="8.2" height="2.7" fill="#fff"/><rect x="5.95" y="3.2" width="2.7" height="8.2" fill="#fff"/></svg>
<svg style="left:140.7px;top:331px;" width="16" height="18" viewBox="0 0 16 18"><rect x="0.6" y="0.6" width="13.5" height="17" fill="#fff" stroke="#3a7a3a" stroke-width="1.2"/><rect x="3.3" y="4" width="6.2" height="1.3" fill="#3a7a3a"/><path d="M9 3.1 L11 5.5 L15 1.2000000000000002" fill="none" stroke="#0b5a0b" stroke-width="2.1"/><rect x="3.3" y="9" width="6.2" height="1.3" fill="#3a7a3a"/><path d="M9 8.1 L11 10.5 L15 6.2" fill="none" stroke="#0b5a0b" stroke-width="2.1"/><rect x="3.3" y="14" width="6.2" height="1.3" fill="#3a7a3a"/><path d="M9 13.1 L11 15.5 L15 11.2" fill="none" stroke="#0b5a0b" stroke-width="2.1"/></svg>
<div class="t" style="left:167.80px;top:331.50px;font-size:13px;color:#333;letter-spacing:-0.611px;">Put Paint Ops on Hold</div>
<svg style="left:106.2px;top:359.3px;" width="6" height="6" viewBox="0 0 6 6"><path d="M0 5.5 L5.7 0 V5.5Z" fill="#707070"/></svg>
<svg style="left:118.8px;top:352.8px;" width="20" height="16" viewBox="0 0 20 16"><path d="M0.6 13.8 V1.6 Q0.6 0.6 1.6 0.6 H5.6 L7.3 2.4 H15 Q16 2.4 16 3.4 V5" fill="#fff" stroke="#0a0a0a" stroke-width="1.2"/><path d="M2.5 5 H18.6 Q19.2 5 19 5.7 L16.8 14.6 Q16.6 15.3 16 15.3 H1.3 Q0.3 15.3 0.5 14.3Z" fill="#0a0a0a"/><path d="M7.5 8 L11 11.5 M11 8 L7.5 11.5" stroke="#fff" stroke-width="1.5"/></svg>
<div class="t" style="left:147.50px;top:355.28px;font-size:14.67px;color:#333;letter-spacing:-0.440px;">Root Causes</div>
<div class="a" style="left:147px;top:371px;width:191px;height:1px;background:#a8a8a8;"></div>
<svg style="left:316.59999999999997px;top:354.0px;" width="15" height="15" viewBox="0 0 15 15"><circle cx="7.3" cy="7.3" r="7.3" fill="#0a0a0a"/><rect x="3.2" y="6" width="8.2" height="2.7" fill="#fff"/><rect x="5.95" y="3.2" width="2.7" height="8.2" fill="#fff"/><path d="M16 13 H19.8 L17.9 15.6Z" fill="#0a0a0a"/></svg>
<svg style="left:106.2px;top:384px;" width="6" height="6" viewBox="0 0 6 6"><path d="M0 5.5 L5.7 0 V5.5Z" fill="#707070"/></svg>
<svg style="left:141px;top:378.9px;" width="14.2" height="16" viewBox="0 0 14.2 16"><rect x="0" y="0" width="14.1" height="15.8" fill="#0a6b0a"/><rect x="0" y="1.2" width="14.1" height="0.7" fill="#7fb07f"/><rect x="0" y="13.6" width="14.1" height="0.8" fill="#7fb07f"/><path d="M4.6 0.3 L6.8 3.2 L4.9 5.8 L7.6 9.6 L6.1 5.8 L8.2 3 L6.6 0.3Z" fill="#fff"/></svg>
<div class="t" style="left:167.80px;top:379.80px;font-size:13px;color:#333;letter-spacing:-0.779px;">Spray Gun Nozzle Too L...</div>
<svg style="left:316.59999999999997px;top:378.7px;" width="15" height="15" viewBox="0 0 15 15"><circle cx="7.3" cy="7.3" r="7.3" fill="#0a0a0a"/><rect x="3.2" y="6" width="8.2" height="2.7" fill="#fff"/><rect x="5.95" y="3.2" width="2.7" height="8.2" fill="#fff"/><path d="M16 13 H19.8 L17.9 15.6Z" fill="#0a0a0a"/></svg>
<svg style="left:160.9px;top:401px;" width="16" height="18" viewBox="0 0 16 18"><rect x="0.6" y="0.6" width="13.5" height="17" fill="#fff" stroke="#3a7a3a" stroke-width="1.2"/><rect x="3.3" y="4" width="6.2" height="1.3" fill="#3a7a3a"/><path d="M9 3.1 L11 5.5 L15 1.2000000000000002" fill="none" stroke="#0b5a0b" stroke-width="2.1"/><rect x="3.3" y="9" width="6.2" height="1.3" fill="#3a7a3a"/><path d="M9 8.1 L11 10.5 L15 6.2" fill="none" stroke="#0b5a0b" stroke-width="2.1"/><rect x="3.3" y="14" width="6.2" height="1.3" fill="#3a7a3a"/><path d="M9 13.1 L11 15.5 L15 11.2" fill="none" stroke="#0b5a0b" stroke-width="2.1"/></svg>
<div class="t" style="left:187.40px;top:401.70px;font-size:13px;color:#333;letter-spacing:-0.559px;">Preventive Action</div>
<svg style="left:119px;top:422.5px;" width="18" height="18" viewBox="0 0 18 18"><path d="M3.2 5 A7.6 7.6 0 1 1 1.3 9.5" fill="none" stroke="#0a0a0a" stroke-width="2.1"/><path d="M0 2.2 L6 3.2 L2.2 7.6Z" fill="#0a0a0a"/><path d="M8.8 3.6 V9.3 H12.3" fill="none" stroke="#0a0a0a" stroke-width="1.3"/></svg>
<div class="t" style="left:147.50px;top:424.98px;font-size:14.67px;color:#333;letter-spacing:0.026px;">History</div>
<div class="a" style="left:147px;top:441px;width:191px;height:1px;background:#a8a8a8;"></div>
<div class="a" style="left:828px;top:184.5px;width:480px;height:7px;background:#d3d3d3;"></div>
<div class="a" style="left:588px;top:184px;width:240px;height:8px;background:#008000;border-top:1px solid #000;border-bottom:1px solid #000;"></div>
<svg style="left:575px;top:175px;" width="26" height="26" viewBox="0 0 26 26"><circle cx="13" cy="13" r="11.8" fill="#008000" stroke="#000" stroke-width="1"/></svg>
<svg style="left:695px;top:175px;" width="26" height="26" viewBox="0 0 26 26"><circle cx="13" cy="13" r="11.8" fill="#008000" stroke="#000" stroke-width="1"/></svg>
<svg style="left:815px;top:175px;" width="26" height="26" viewBox="0 0 26 26"><circle cx="13" cy="13" r="11.8" fill="#3cb371" stroke="#000" stroke-width="1"/></svg>
<svg style="left:935px;top:175px;" width="26" height="26" viewBox="0 0 26 26"><circle cx="13" cy="13" r="11.6" fill="#d3d3d3" /></svg>
<svg style="left:1055px;top:175px;" width="26" height="26" viewBox="0 0 26 26"><circle cx="13" cy="13" r="11.6" fill="#d3d3d3" /></svg>
<svg style="left:1175px;top:175px;" width="26" height="26" viewBox="0 0 26 26"><circle cx="13" cy="13" r="11.6" fill="#d3d3d3" /></svg>
<svg style="left:1295px;top:175px;" width="26" height="26" viewBox="0 0 26 26"><circle cx="13" cy="13" r="11.6" fill="#d3d3d3" /></svg>
<div class="t" style="left:576.00px;top:206.64px;font-size:12px;font-weight:700;color:#111;letter-spacing:-0.037px;">New</div>
<div class="t" style="left:676.70px;top:206.64px;font-size:12px;font-weight:700;color:#111;letter-spacing:-0.273px;">Disposition</div>
<div class="t" style="left:798.60px;top:206.64px;font-size:12px;font-weight:700;color:#111;letter-spacing:-0.253px;">Correction</div>
<div class="t" style="left:918.90px;top:206.84px;font-size:12px;color:#222;letter-spacing:-0.519px;">Root Cause</div>
<div class="t" style="left:1051.50px;top:206.84px;font-size:12px;color:#222;letter-spacing:-0.110px;">Action</div>
<div class="t" style="left:1162.30px;top:206.84px;font-size:12px;color:#222;letter-spacing:-0.023px;">Complete</div>
<div class="t" style="left:1290.40px;top:206.84px;font-size:12px;color:#222;letter-spacing:-0.491px;">Closed</div>
<div class="t" style="left:363.30px;top:235.54px;font-size:12px;color:#1a1a1a;letter-spacing:-0.827px;">NCR#:</div>
<div class="t" style="left:363.30px;top:261.84px;font-size:12px;color:#1a1a1a;letter-spacing:0.048px;">Originator:</div>
<div class="t" style="left:363.30px;top:288.54px;font-size:12px;color:#1a1a1a;letter-spacing:-0.509px;">Source:</div>
<div class="t" style="left:363.30px;top:315.64px;font-size:12px;color:#1a1a1a;letter-spacing:-0.195px;">Vendor:</div>
<div class="a" style="left:423px;top:230px;width:526px;height:22px;border:1px solid #acacac;"></div>
<div class="a" style="left:423px;top:256px;width:526px;height:22px;border:1px solid #acacac;"></div>
<div class="a" style="left:931px;top:258px;width:16px;height:18px;background:#e8e8e8;border:1px solid #acacac;"></div>
<svg style="left:931px;top:258px;" width="16" height="18" viewBox="0 0 16 18"><g fill="#666"><rect x="3.2" y="8.3" width="1.8" height="1.8"/><rect x="7.1" y="8.3" width="1.8" height="1.8"/><rect x="11" y="8.3" width="1.8" height="1.8"/></g></svg>
<div class="a" style="left:423px;top:282px;width:492px;height:24px;border:1px solid #acacac;"></div>
<div class="a" style="left:898px;top:284px;width:15px;height:20px;background:#e8e8e8;border:1px solid #acacac;"></div>
<svg style="left:898px;top:284px;" width="15" height="20" viewBox="0 0 15 20"><path d="M3.9 8.2 L7.5 11.8 L11.1 8.2" fill="none" stroke="#555" stroke-width="1.4"/></svg>
<svg style="left:926px;top:285.8px;" width="16" height="16" viewBox="0 0 16 16"><g transform="translate(8,8)" fill="#000"><rect x="-1.4" y="-7.4" width="2.8" height="3.5" transform="rotate(0)"/><rect x="-1.4" y="-7.4" width="2.8" height="3.5" transform="rotate(45)"/><rect x="-1.4" y="-7.4" width="2.8" height="3.5" transform="rotate(90)"/><rect x="-1.4" y="-7.4" width="2.8" height="3.5" transform="rotate(135)"/><rect x="-1.4" y="-7.4" width="2.8" height="3.5" transform="rotate(180)"/><rect x="-1.4" y="-7.4" width="2.8" height="3.5" transform="rotate(225)"/><rect x="-1.4" y="-7.4" width="2.8" height="3.5" transform="rotate(270)"/><rect x="-1.4" y="-7.4" width="2.8" height="3.5" transform="rotate(315)"/><circle r="5.4"/><circle r="2.4" fill="#fff"/></g></svg>
<div class="a" style="left:423px;top:310px;width:526px;height:22px;border:1px solid #acacac;"></div>
<div class="a" style="left:932px;top:312px;width:15px;height:18px;background:#e8e8e8;border:1px solid #acacac;"></div>
<svg style="left:932px;top:312px;" width="15" height="18" viewBox="0 0 15 18"><path d="M3.9 7.2 L7.5 10.8 L11.1 7.2" fill="none" stroke="#555" stroke-width="1.4"/></svg>
<div class="t" style="left:428.30px;top:235.54px;font-size:12px;color:#333;letter-spacing:-0.272px;">637025902860769832</div>
<div class="t" style="left:428.30px;top:261.84px;font-size:12px;color:#333;letter-spacing:-0.226px;">cwagner</div>
<div class="t" style="left:428.30px;top:288.54px;font-size:12px;color:#333;">Production</div>
<div class="t" style="left:953.20px;top:235.84px;font-size:12px;color:#1a1a1a;">Title:</div>
<div class="t" style="left:953.20px;top:261.84px;font-size:12px;color:#1a1a1a;letter-spacing:-0.217px;">Date Created:</div>
<div class="t" style="left:953.20px;top:288.54px;font-size:12px;color:#1a1a1a;letter-spacing:-0.125px;">Location:</div>
<div class="t" style="left:953.20px;top:315.64px;font-size:12px;color:#1a1a1a;letter-spacing:-0.121px;">Profile:</div>
<div class="a" style="left:1029px;top:230px;width:510px;height:22px;border:1px solid #acacac;"></div>
<div class="a" style="left:1029px;top:256px;width:510px;height:22px;border:1px solid #d2d2d2;"></div>
<div class="a" style="left:1029px;top:282px;width:476px;height:24px;border:1px solid #acacac;"></div>
<div class="a" style="left:1487px;top:284px;width:16px;height:20px;background:#e8e8e8;border:1px solid #acacac;"></div>
<svg style="left:1487px;top:284px;" width="16" height="20" viewBox="0 0 16 20"><path d="M4.4 8.2 L8.0 11.8 L11.6 8.2" fill="none" stroke="#555" stroke-width="1.4"/></svg>
<svg style="left:1516px;top:286px;" width="16" height="16" viewBox="0 0 16 16"><g transform="translate(8,8)" fill="#000"><rect x="-1.4" y="-7.4" width="2.8" height="3.5" transform="rotate(0)"/><rect x="-1.4" y="-7.4" width="2.8" height="3.5" transform="rotate(45)"/><rect x="-1.4" y="-7.4" width="2.8" height="3.5" transform="rotate(90)"/><rect x="-1.4" y="-7.4" width="2.8" height="3.5" transform="rotate(135)"/><rect x="-1.4" y="-7.4" width="2.8" height="3.5" transform="rotate(180)"/><rect x="-1.4" y="-7.4" width="2.8" height="3.5" transform="rotate(225)"/><rect x="-1.4" y="-7.4" width="2.8" height="3.5" transform="rotate(270)"/><rect x="-1.4" y="-7.4" width="2.8" height="3.5" transform="rotate(315)"/><circle r="5.4"/><circle r="2.4" fill="#fff"/></g></svg>
<div class="a" style="left:1029px;top:310px;width:510px;height:22px;border:1px solid #acacac;"></div>
<div class="a" style="left:1521px;top:312px;width:16px;height:18px;background:#e8e8e8;border:1px solid #acacac;"></div>
<svg style="left:1521px;top:312px;" width="16" height="18" viewBox="0 0 16 18"><path d="M4.4 7.2 L8.0 10.8 L11.6 7.2" fill="none" stroke="#555" stroke-width="1.4"/></svg>
<div class="t" style="left:1034.00px;top:235.84px;font-size:12px;color:#333;letter-spacing:-0.218px;">Send to MRB_NonConformance_637025902860769832</div>
<div class="t" style="left:1034.00px;top:261.84px;font-size:12px;color:#333;letter-spacing:0.098px;">8/28/2019 11:58 AM</div>
<div class="t" style="left:1034.00px;top:315.64px;font-size:12px;color:#333;letter-spacing:-0.075px;">MRB Non-Conformance</div>
<div class="a" style="left:363px;top:342px;width:1176px;height:297px;border:1px solid #adadad;"></div>
<div class="a" style="left:364px;top:363px;width:1174px;height:1px;background:#b0b0b0;"></div>
<div class="t" style="left:375.00px;top:347.84px;font-size:12px;color:#1a1a1a;">Affected Items</div>
<div class="a" style="left:364px;top:388px;width:1174px;height:26px;background:#b3d7f1;"></div>
<div class="a" style="left:364px;top:387px;width:1174px;height:1px;background:#d6d6d6;"></div>
<div class="a" style="left:364px;top:414px;width:1174px;height:1px;background:#dcdcdc;"></div>
<div class="a" style="left:489px;top:364px;width:1px;height:50px;background:#d8d8d8;"></div>
<div class="a" style="left:564px;top:364px;width:1px;height:50px;background:#d8d8d8;"></div>
<div class="a" style="left:639px;top:364px;width:1px;height:50px;background:#d8d8d8;"></div>
<div class="a" style="left:764px;top:364px;width:1px;height:50px;background:#d8d8d8;"></div>
<div class="a" style="left:1371px;top:364px;width:1px;height:50px;background:#d8d8d8;"></div>
<div class="a" style="left:1496px;top:364px;width:1px;height:50px;background:#d8d8d8;"></div>
<div class="t" style="left:369.30px;top:370.74px;font-size:12px;color:#333;letter-spacing:0.075px;">Identifier</div>
<div class="t" style="left:493.90px;top:370.74px;font-size:12px;color:#333;letter-spacing:0.116px;">Quantity</div>
<div class="t" style="left:569.10px;top:370.74px;font-size:12px;color:#333;letter-spacing:-0.125px;">Unit of Issue</div>
<div class="t" style="left:644.40px;top:370.74px;font-size:12px;color:#333;letter-spacing:-0.142px;">Part Number</div>
<div class="t" style="left:769.00px;top:370.74px;font-size:12px;color:#333;letter-spacing:-0.022px;">Description</div>
<div class="t" style="left:1376.50px;top:370.74px;font-size:12px;color:#333;letter-spacing:-0.471px;">Batch</div>
<div class="t" style="left:1501.60px;top:370.74px;font-size:12px;color:#333;letter-spacing:-0.957px;">Trace</div>
<div class="t" style="left:370.40px;top:395.84px;font-size:12px;color:#1a1a1a;letter-spacing:-0.412px;">AS8282-SN10</div>
<div class="t" style="left:495.80px;top:395.84px;font-size:12px;color:#1a1a1a;">1</div>
<div class="t" style="left:569.90px;top:395.84px;font-size:12px;color:#1a1a1a;letter-spacing:-0.724px;">Pieces</div>
<div class="t" style="left:645.00px;top:395.84px;font-size:12px;color:#1a1a1a;letter-spacing:-0.405px;">AS-828</div>
<div class="t" style="left:770.50px;top:395.84px;font-size:12px;color:#1a1a1a;letter-spacing:-0.486px;">Inboard Flap, 828, SP26, LEFT</div>
<div class="t" style="left:1377.20px;top:395.84px;font-size:12px;color:#1a1a1a;letter-spacing:-0.017px;width:114px;overflow:hidden;">WO-AS828-08282019</div>
<svg style="left:1511.3px;top:393.6px;" width="12" height="15" viewBox="0 0 12 15"><rect x="0" y="0" width="11.9" height="14.6" rx="0.8" fill="#111"/><rect x="1.2" y="1.3" width="9.5" height="1.1" fill="#b3d7f1"/><path d="M4.2 10.4 A2.6 2.6 0 1 0 3.7 7.4" fill="none" stroke="#fff" stroke-width="1.2"/><path d="M2 6.2 L5 7 L2.4 9.2Z" fill="#fff"/></svg>
<div class="a" style="left:363px;top:649px;width:583px;height:297px;border:1px solid #adadad;"></div>
<div class="a" style="left:364px;top:670px;width:581px;height:1px;background:#b0b0b0;"></div>
<div class="t" style="left:375.50px;top:654.64px;font-size:12px;color:#1a1a1a;letter-spacing:-0.112px;">Notes</div>
<div class="a" style="left:364px;top:695px;width:581px;height:1px;background:#dcdcdc;"></div>
<div class="t" style="left:371.50px;top:676.47px;font-size:13.5px;font-weight:700;color:#1c2a44;font-family:'Liberation Serif',serif;">B</div>
<div class="t" style="left:394.50px;top:676.47px;font-size:13.5px;font-weight:700;color:#1c2a44;font-family:'Liberation Serif',serif;font-style:italic;">I</div>
<div class="t" style="left:416.80px;top:676.47px;font-size:13.5px;font-weight:700;color:#1c2a44;font-family:'Liberation Serif',serif;">U</div>
<div class="a" style="left:417px;top:688.3px;width:10px;height:1.3px;background:#1c2a44;"></div>
<div class="t" style="left:439.50px;top:676.47px;font-size:13.5px;font-weight:700;color:#1c2a44;font-family:'Liberation Serif',serif;">S</div>
<div class="a" style="left:438.5px;top:682.6px;width:11.5px;height:1.2px;background:#1c2a44;"></div>
<div class="a" style="left:458px;top:677px;width:1px;height:13px;background:#d0d0d0;"></div>
<div class="a" style="left:461px;top:672px;width:22px;height:22px;background:#92bfe3;"></div>
<svg style="left:464px;top:676px;" width="16" height="14" viewBox="0 0 16 14"><rect x="1" y="1.6" width="12.5" height="1.3" fill="#1c2a44"/><rect x="1" y="3.8" width="9" height="1.3" fill="#1c2a44"/><rect x="1" y="6" width="12.5" height="1.3" fill="#1c2a44"/><rect x="1" y="8.2" width="9" height="1.3" fill="#1c2a44"/><rect x="1" y="10.4" width="12.5" height="1.3" fill="#1c2a44"/></svg>
<svg style="left:487px;top:676px;" width="16" height="14" viewBox="0 0 16 14"><rect x="1.5" y="1.6" width="12.5" height="1.3" fill="#1c2a44"/><rect x="4" y="3.8" width="7.5" height="1.3" fill="#1c2a44"/><rect x="1.5" y="6" width="12.5" height="1.3" fill="#1c2a44"/><rect x="4" y="8.2" width="7.5" height="1.3" fill="#1c2a44"/><rect x="1.5" y="10.4" width="12.5" height="1.3" fill="#1c2a44"/></svg>
<svg style="left:510px;top:676px;" width="16" height="14" viewBox="0 0 16 14"><rect x="2" y="1.6" width="12.5" height="1.3" fill="#1c2a44"/><rect x="5.5" y="3.8" width="9" height="1.3" fill="#1c2a44"/><rect x="2" y="6" width="12.5" height="1.3" fill="#1c2a44"/><rect x="5.5" y="8.2" width="9" height="1.3" fill="#1c2a44"/><rect x="2" y="10.4" width="12.5" height="1.3" fill="#1c2a44"/></svg>
<svg style="left:533px;top:675px;" width="16" height="15" viewBox="0 0 16 15"><g fill="#3b8ed6"><circle cx="3" cy="2.6" r="1.9"/><circle cx="3" cy="7.6" r="1.9"/><circle cx="3" cy="12.6" r="1.9"/></g><g fill="#fff"><circle cx="3" cy="2.6" r="0.8"/><circle cx="3" cy="7.6" r="0.8"/><circle cx="3" cy="12.6" r="0.8"/></g><g fill="#1c2a44"><rect x="7" y="1.9" width="7.8" height="1.3"/><rect x="7" y="6.9" width="7.8" height="1.3"/><rect x="7" y="11.9" width="7.8" height="1.3"/></g></svg>
<svg style="left:556px;top:675px;" width="16" height="15" viewBox="0 0 16 15"><g fill="#b01818"><rect x="2.2" y="0.6" width="1.6" height="3.6"/><rect x="1.8" y="5.6" width="2.3" height="3.3"/><rect x="1.8" y="10.6" width="2.3" height="3.4"/></g><g fill="#1c2a44"><rect x="6" y="1.9" width="7.8" height="1.3"/><rect x="6" y="6.9" width="7.8" height="1.3"/><rect x="6" y="11.9" width="7.8" height="1.3"/></g></svg>
<div class="a" style="left:577px;top:677px;width:1px;height:13px;background:#d0d0d0;"></div>
<svg style="left:583px;top:675px;" width="15" height="15" viewBox="0 0 15 15"><circle cx="6.5" cy="6.5" r="6.2" fill="#2f8f3a"/><path d="M2 4 Q5 1 8 2 L10 5 L7 8 L4 7Z" fill="#3d7fd0"/><path d="M8 9 L12 7 L11 11Z" fill="#3d7fd0"/><rect x="4.2" y="9.4" width="10.2" height="5" rx="2.5" fill="#fff" stroke="#444" stroke-width="1.4"/><rect x="7" y="11.4" width="4.8" height="1.2" fill="#444"/></svg>
<svg style="left:606px;top:676px;" width="15" height="13" viewBox="0 0 15 13"><rect x="0.6" y="0.6" width="13.8" height="11.4" fill="#fff" stroke="#5a7fc0" stroke-width="1.2"/><rect x="2" y="2" width="11" height="8.6" fill="#8cc85a"/><rect x="2" y="2" width="11" height="4" fill="#a6d0f0"/><circle cx="8.5" cy="5.6" r="2.8" fill="#f0a030"/><circle cx="8.5" cy="5.6" r="1.2" fill="#c06010"/></svg>
<svg style="left:629px;top:676px;" width="16" height="13" viewBox="0 0 16 13"><rect x="0.6" y="0.6" width="15" height="12" fill="#fff" stroke="#3f78c8" stroke-width="1.2"/><rect x="0.6" y="0.6" width="15" height="3" fill="#3f78c8"/><g stroke="#3f78c8" stroke-width="1"><path d="M0.6 6.6 H15.6 M0.6 9.6 H15.6 M5.6 3.6 V12.6 M10.6 3.6 V12.6"/></g></svg>
<div class="a" style="left:928px;top:696px;width:17px;height:231px;background:#f0f0f0;"></div>
<div class="a" style="left:364px;top:927px;width:581px;height:18px;background:#f0f0f0;"></div>
<svg style="left:928px;top:696px;" width="17" height="17" viewBox="0 0 17 17"><path d="M5.2 10.5 L8.5 7.2 L11.8 10.5" fill="none" stroke="#c2c2c2" stroke-width="1.3"/></svg>
<svg style="left:928px;top:910px;" width="17" height="17" viewBox="0 0 17 17"><path d="M5.2 6.5 L8.5 9.8 L11.8 6.5" fill="none" stroke="#c2c2c2" stroke-width="1.3"/></svg>
<svg style="left:364px;top:927px;" width="17" height="18" viewBox="0 0 17 18"><path d="M11 5.5 L7.5 9 L11 12.5" fill="none" stroke="#c2c2c2" stroke-width="1.3"/></svg>
<svg style="left:911px;top:927px;" width="17" height="18" viewBox="0 0 17 18"><path d="M6 5.5 L9.5 9 L6 12.5" fill="none" stroke="#c2c2c2" stroke-width="1.3"/></svg>
<div class="t" style="left:380.00px;top:703.07px;font-size:13.5px;color:#1a1a1a;letter-spacing:-0.012px;">Paint Run on wing recorded at Paint Inspection Operation - Repainting will delay shipping</div>
<div class="t" style="left:380.00px;top:721.17px;font-size:13.5px;color:#1a1a1a;letter-spacing:0.221px;">of product.</div>
<div class="t" style="left:380.00px;top:757.07px;font-size:13.5px;color:#1a1a1a;letter-spacing:0.070px;">Need to perform CAPA to ensure paint run does not occur on future units.</div>
<div class="a" style="left:956px;top:649px;width:583px;height:297px;border:1px solid #adadad;"></div>
<div class="a" style="left:957px;top:670px;width:581px;height:1px;background:#b0b0b0;"></div>
<div class="t" style="left:968.70px;top:654.64px;font-size:12px;color:#1a1a1a;letter-spacing:0.016px;">Documentation</div>
<div class="a" style="left:957px;top:695px;width:581px;height:1px;background:#cfcfcf;"></div>
<svg style="left:964.5px;top:676px;" width="15" height="14" viewBox="0 0 15 14"><g transform="translate(7.35 6.75) rotate(-45) translate(-9 -3.4)"><path d="M14 0.7 H3.4 A2.7 2.7 0 0 0 3.4 6.1 H15.2 A1.9 1.9 0 0 0 15.2 2.3 H5" fill="none" stroke="#222" stroke-width="1.25"/></g></svg>
<div class="t" style="left:984.40px;top:677.74px;font-size:12px;color:#222;letter-spacing:-0.176px;">Add</div>
<svg style="left:1025.8px;top:677px;" width="12.5" height="12" viewBox="0 0 12.5 12"><path d="M1.5 1.5 L11 10.5 M11 1.5 L1.5 10.5" stroke="#bdbdbd" stroke-width="2.8"/></svg>
<div class="t" style="left:1044.60px;top:677.74px;font-size:12px;color:#c4c4c4;letter-spacing:-0.318px;">Delete</div>
<div class="t" style="left:1461.00px;top:999.27px;font-size:14.8px;color:#fff;-webkit-text-stroke:0.3px #fff;transform:scaleX(1.5252);transform-origin:0 0;">AEGIS</div>
<div class="t" style="left:1462.00px;top:1015.14px;font-size:4.8px;font-weight:700;color:#fff;letter-spacing:8.257px;">SOFTWARE</div>
<svg style="left:1532px;top:988px;" width="27" height="22" viewBox="0 0 27 22"><path d="M13 0 L26 10.8 L13 21.7 L0 10.8Z" fill="#e83a34"/><path d="M13 0 L26 10.8 L21 13 L17 9.5 V17 L13 21.7Z" fill="#fff"/></svg>
</body></html>
